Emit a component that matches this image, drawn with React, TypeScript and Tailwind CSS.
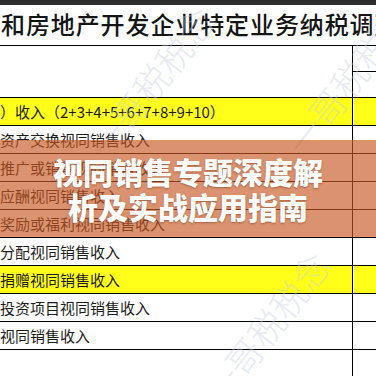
import React from 'react';

const cjk = { fontFamily: '"Noto Sans CJK SC", "Noto Sans", sans-serif' };

type Row = { label: string; yellow?: boolean };

const rows: Row[] = [
  { label: '）收入（2+3+4+5+6+7+8+9+10）', yellow: true },
  { label: '资产交换视同销售收入' },
  { label: '推广或销售视同销售收入' },
  { label: '应酬视同销售收入' },
  { label: '奖励或福利视同销售收入' },
  { label: '分配视同销售收入' },
  { label: '捐赠视同销售收入', yellow: true },
  { label: '投资项目视同销售收入' },
  { label: '视同销售收入' },
  { label: '' },
];

const App: React.FC = () => {
  return (
    <div className="relative w-[376px] h-[376px] overflow-hidden bg-white" style={cjk}>
      {/* dark strip on top */}
      <div className="h-[5px] bg-[#2e2e2e]" />

      {/* title */}
      <div className="h-[41px] border-b border-black flex items-center pb-[3px] overflow-hidden">
        <span className="whitespace-nowrap text-[24px] leading-none font-medium text-[#151515] tracking-[0.9px] pl-[1px]">
          和房地产开发企业特定业务纳税调整
        </span>
      </div>

      {/* header block */}
      <div className="flex h-[52px] border-b border-black">
        <div className="w-[353px] border-r border-black" />
        <div className="flex-1 flex flex-col">
          <div className="h-[26px] border-b border-black" />
          <div className="flex-1" />
        </div>
      </div>

      {/* rows */}
      {rows.map((r, i) => (
        <div
          key={i}
          className={`flex h-[28px] border-b border-black ${r.yellow ? 'bg-[#ffff1a]' : 'bg-white'}`}
        >
          <div className="w-[353px] border-r border-black flex items-center overflow-hidden">
            <span className="whitespace-nowrap text-[15px] leading-none text-[#1c1c1c]">{r.label}</span>
          </div>
          <div className={`flex-1 ${r.yellow ? 'border-l border-white' : ''}`} />
        </div>
      ))}

      {/* watermark */}
      <div className="absolute left-[60px] top-[55px] -rotate-[52deg] text-[36px] font-light text-[#c4cde3] opacity-40 whitespace-nowrap pointer-events-none">
        一哥税税念
      </div>
      <div className="absolute left-[175px] top-[300px] -rotate-[52deg] text-[36px] font-light text-[#c4cde3] opacity-40 whitespace-nowrap pointer-events-none">
        一哥税税念
      </div>
      <div className="absolute left-[265px] top-[65px] -rotate-[52deg] text-[36px] font-light text-[#c4cde3] opacity-40 whitespace-nowrap pointer-events-none">
        一哥税税
      </div>

      {/* banner */}
      <div className="absolute left-0 right-0 top-[140px] h-[97px] bg-[rgba(200,88,35,0.65)] flex flex-col items-center justify-center">
        <div className="text-white font-black text-[30px] leading-[35px] text-center [text-shadow:0_1px_2px_rgba(120,50,20,0.5)]">
          <div>视同销售专题深度解</div>
          <div>析及实战应用指南</div>
        </div>
      </div>
    </div>
  );
};

export default App;
